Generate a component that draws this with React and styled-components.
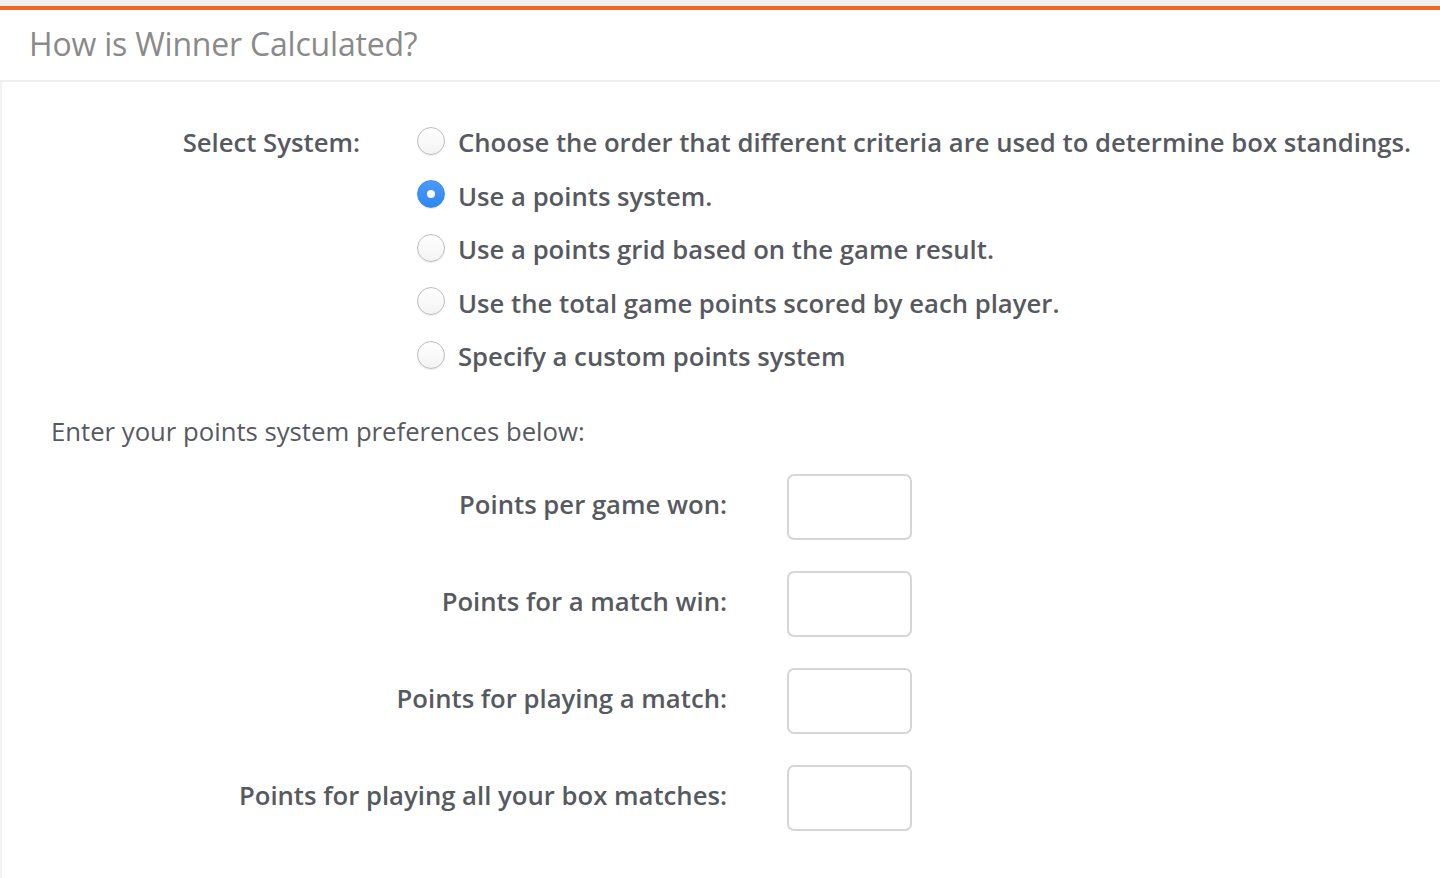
import styled, { createGlobalStyle } from "styled-components";

const GlobalStyle = createGlobalStyle`
  html, body {
    margin: 0;
    padding: 0;
    background: #fff;
    font-family: "Open Sans", "Noto Sans", sans-serif;
    color: #565a5f;
  }
  * { box-sizing: border-box; }
`;

const Page = styled.div`
  padding-top: 6px;
  background: #f0f0f0;
  min-height: 878px;
`;

const Panel = styled.section`
  background: #fff;
  border-top: 4px solid #f26522;
  min-height: 868px;
`;

const Header = styled.header`
  height: 72px;
  display: flex;
  align-items: center;
  padding: 0 0 3px 29px;
  border-bottom: 2px solid #efefef;

  h2 {
    margin: 0;
    font-size: 32px;
    font-weight: 400;
    color: #8a8a8a;
    letter-spacing: -0.2px;
  }
`;

const Body = styled.div`
  border-left: 2px solid #f3f3f3;
  padding: 34px 0 40px;
  min-height: 796px;
`;

const SystemGrid = styled.div`
  display: grid;
  grid-template-columns: 358px 1fr;
  column-gap: 57px;
`;

const FieldLabel = styled.div`
  text-align: right;
  font-size: 25.7px;
  font-weight: 600;
  line-height: 54px;
  height: 54px;
`;

const Options = styled.div`
  display: flex;
  flex-direction: column;
`;

const Option = styled.label`
  display: flex;
  align-items: center;
  gap: 13px;
  height: 53.5px;
  font-size: 25.7px;
  font-weight: 600;
  white-space: nowrap;
  cursor: pointer;
`;

const Radio = styled.span`
  width: 28px;
  height: 28px;
  flex: none;
  border-radius: 50%;
  position: relative;
  border: 1px solid ${(p) => (p.$checked ? "#3a8df5" : "#bdbdbd")};
  background: ${(p) =>
    p.$checked
      ? "linear-gradient(#4a9bf8, #2f86f2)"
      : "linear-gradient(#ffffff, #f3f3f3)"};
  box-shadow: 0 1px 1px rgba(0, 0, 0, 0.08);
  margin-top: -4px;

  &::after {
    content: "";
    display: ${(p) => (p.$checked ? "block" : "none")};
    position: absolute;
    width: 8px;
    height: 8px;
    border-radius: 50%;
    background: #fff;
    top: 9px;
    left: 9px;
  }
`;

const Intro = styled.p`
  margin: 31px 0 0 49px;
  font-size: 25.7px;
  font-weight: 400;
  line-height: 34px;
`;

const PointsList = styled.div`
  margin-top: 25px;
  display: flex;
  flex-direction: column;
  gap: 31px;
`;

const PointsRow = styled.div`
  display: grid;
  grid-template-columns: 725px 124px;
  column-gap: 60px;
  align-items: center;
`;

const PointsLabel = styled.label`
  text-align: right;
  font-size: 25.7px;
  font-weight: 600;
  margin-top: -4px;
`;

const NumberInput = styled.input`
  width: 125px;
  height: 66px;
  border: 2px solid #d6d6d6;
  border-radius: 7px;
  background: #fff;
  font: inherit;
  font-size: 22px;
  padding: 0 12px;
  outline: none;
`;

const systems = [
  "Choose the order that different criteria are used to determine box standings.",
  "Use a points system.",
  "Use a points grid based on the game result.",
  "Use the total game points scored by each player.",
  "Specify a custom points system",
];

const pointFields = [
  "Points per game won:",
  "Points for a match win:",
  "Points for playing a match:",
  "Points for playing all your box matches:",
];

const App = () => {
  const selected = 1;

  return (
    <Page>
      <GlobalStyle />
      <Panel>
        <Header>
          <h2>How is Winner Calculated?</h2>
        </Header>
        <Body>
          <SystemGrid>
            <FieldLabel>Select System:</FieldLabel>
            <Options>
              {systems.map((s, i) => (
                <Option key={s}>
                  <Radio $checked={i === selected} />
                  {s}
                </Option>
              ))}
            </Options>
          </SystemGrid>
          <Intro>Enter your points system preferences below:</Intro>
          <PointsList>
            {pointFields.map((f) => (
              <PointsRow key={f}>
                <PointsLabel>{f}</PointsLabel>
                <NumberInput type="text" />
              </PointsRow>
            ))}
          </PointsList>
        </Body>
      </Panel>
    </Page>
  );
};

export default App;
